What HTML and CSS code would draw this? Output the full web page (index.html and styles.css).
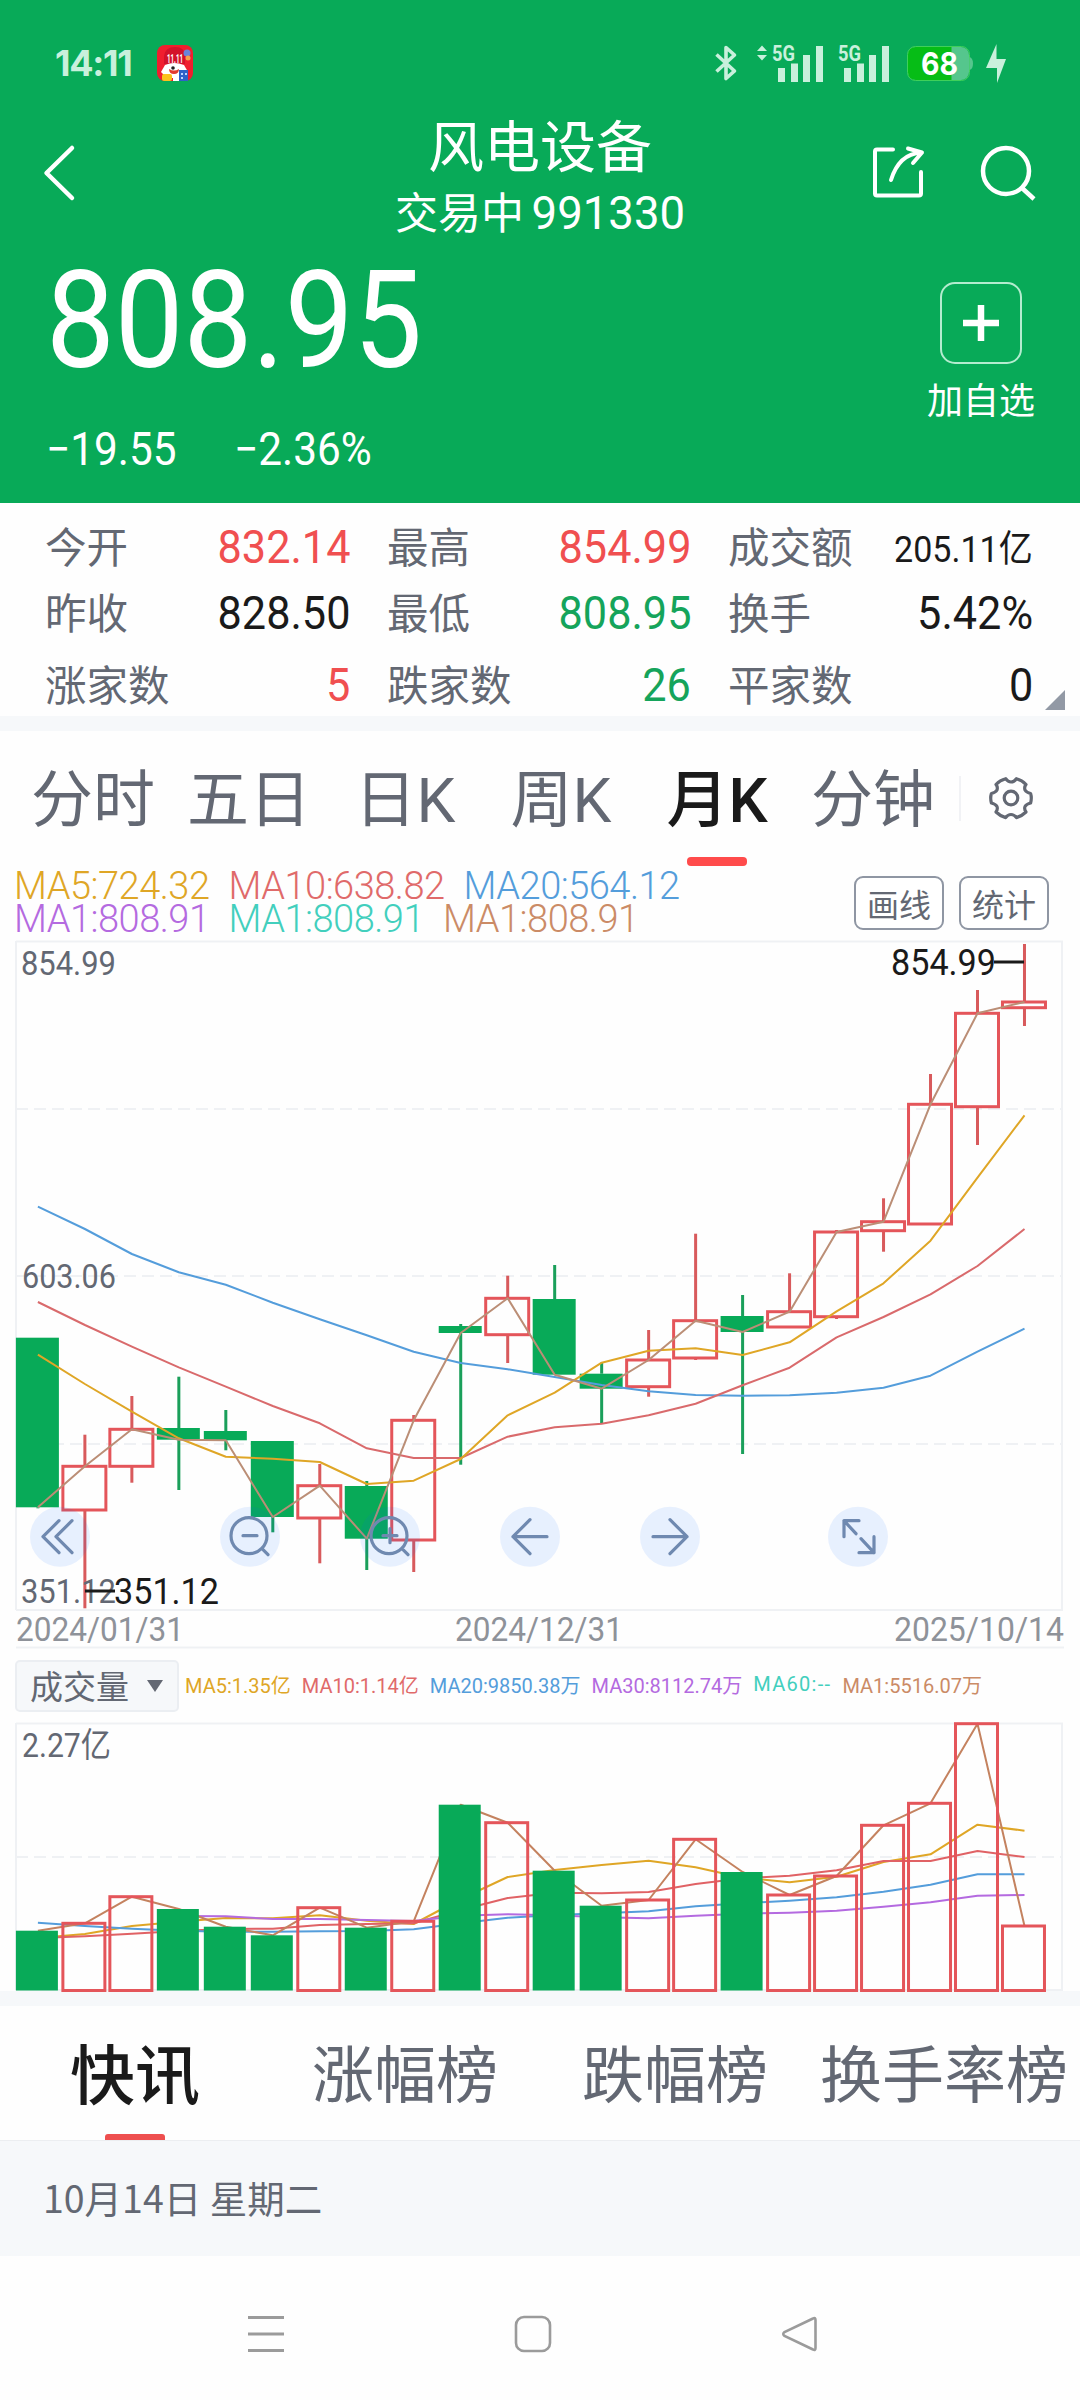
FILE: index.html
```html
<!DOCTYPE html>
<html lang="zh-CN">
<head>
    <meta charset="UTF-8">
    <meta name="viewport" content="width=device-width, initial-scale=1.0">
    <title>风电设备 991330</title>
    <link rel="stylesheet" href="styles.css">
</head>
<body>
    <header class="header">
        <div class="status-bar">
            <span class="clock">14:11</span>
            <svg class="app-icon" width="36" height="36" viewBox="0 0 36 36">
                <rect width="36" height="36" rx="8" fill="#f01e2e"/>
                <path d="M7 19V11Q8 2 18 2Q28 2 28 11V19Z" fill="#d3122a"/>
                <circle cx="30" cy="8" r="3.5" fill="#6a83d8"/>
                <circle cx="31" cy="13" r="2.5" fill="#f3a04c"/>
                <path d="M4 27L8 20Q17 16 27 20L31 27L25 33H10Z" fill="#fff"/>
                <path d="M12 24Q17 27 22 24Q22 29 17 29Q12 29 12 24Z" fill="#e23a2e"/>
                <circle cx="16" cy="23" r="1.8" fill="#222"/>
                <rect x="5" y="29" width="10" height="7" rx="2" fill="#fbc21c"/>
                <rect x="16" y="31" width="6" height="5" fill="#fff"/>
                <rect x="22" y="25" width="9" height="11" fill="#2f62c8"/>
                <path d="M24 28h2v2h-2zM28 28h2v2h-2zM24 32h2v2h-2z" fill="#bcd4ff"/>
                <text x="10" y="18" class="app-text" textLength="16" lengthAdjust="spacingAndGlyphs">11.11</text>
            </svg>
            <div class="status-icons">
                <svg width="24" height="40" viewBox="0 0 24 40">
                    <path d="M2.5 11.5L20.5 28L12 35.500V4.500L20.500 12L2.500 28.500" fill="none" stroke="#c9f0dc" stroke-width="3.6" stroke-linejoin="round"/>
                </svg>
                <svg width="68" height="40" viewBox="0 0 68 40" class="signal-dual">
                    <path d="M5 2.500L10 8H0ZM0 12H10L5 17.500Z" fill="#c9f0dc"/>
                    <text x="15" y="18" class="net" textLength="23" lengthAdjust="spacingAndGlyphs">5G</text>
                    <path d="M21 25h7v14h-7zM34 20.500h7v18.500h-7zM46 12h7v27h-7zM59 3h7v36h-7z" fill="#c9f0dc"/>
                </svg>
                <svg width="53" height="40" viewBox="0 0 53 40" class="signal">
                    <text x="0" y="18" class="net" textLength="23" lengthAdjust="spacingAndGlyphs">5G</text>
                    <path d="M6 25h7v14h-7zM19 20.500h7v18.500h-7zM31 12h7v27h-7zM44 3h7v36h-7z" fill="#c9f0dc"/>
                </svg>
                <svg width="66" height="36" viewBox="0 0 66 36" class="battery">
                    <rect x="1" y="1" width="61" height="33" rx="8" fill="#55c68d"/>
                    <path d="M9 1H44.500V34H9Q1 34 1 26V9Q1 1 9 1Z" fill="#06bd16"/>
                    <rect x=".5" y=".5" width="62" height="34" rx="8" fill="none" stroke="#3fd05a"/>
                    <path d="M62.500 11Q66 12 66 17.500Q66 23 62.500 24Z" fill="#55c68d"/>
                    <text x="14" y="28.500" class="battery-text" textLength="37" lengthAdjust="spacingAndGlyphs">68</text>
                </svg>
                <svg width="22" height="40" viewBox="0 0 22 40">
                    <path d="M11.500 1V16H21L12 40V25H1Z" fill="#c9f0dc"/>
                </svg>
            </div>
        </div>
        <div class="title-bar">
            <svg class="back" width="34" height="58" viewBox="0 0 34 58">
                <path d="M31 4L5.500 29L31 54" fill="none" stroke="#fff" stroke-width="4.500" stroke-linecap="round" stroke-linejoin="round"/>
            </svg>
            <div class="titles">
                <h1>风电设备</h1>
                <p>交易中 <span class="num">991330</span></p>
            </div>
            <div class="actions">
                <svg width="54" height="54" viewBox="0 0 54 54" fill="none" stroke="#fff" stroke-width="4" stroke-linecap="round" stroke-linejoin="round">
                    <path d="M21 4.500H5Q3 4.500 3 6.500V48.500Q3 50.500 5 50.500H47Q49 50.500 49 48.500V27"/>
                    <path d="M19 35Q27 9 49 7.500M36 3.500L50 7.500L41 18"/>
                </svg>
                <svg width="56" height="56" viewBox="0 0 56 56" fill="none" stroke="#fff" stroke-width="4.500">
                    <circle cx="26" cy="26" r="23"/>
                    <path d="M42 43L54 54"/>
                </svg>
            </div>
        </div>
        <div class="quote">
            <div>
                <div class="price">808.95</div>
                <div class="change"><span>−19.55</span><span>−2.36%</span></div>
            </div>
            <div class="add">
                <div class="add-box">
                    <svg width="36" height="36" viewBox="0 0 36 36"><path d="M18 0V36M0 18H36" stroke="#fff" stroke-width="6.500"/></svg>
                </div>
                <span>加自选</span>
            </div>
        </div>
    </header>

    <section class="stats">
        <div class="stat"><span>今开</span><b class="up">832.14</b></div>
        <div class="stat"><span>最高</span><b class="up">854.99</b></div>
        <div class="stat"><span>成交额</span><b class="small">205.11亿</b></div>
        <div class="stat"><span>昨收</span><b>828.50</b></div>
        <div class="stat"><span>最低</span><b class="down">808.95</b></div>
        <div class="stat"><span>换手</span><b>5.42%</b></div>
        <div class="stat"><span>涨家数</span><b class="up">5</b></div>
        <div class="stat"><span>跌家数</span><b class="down">26</b></div>
        <div class="stat"><span>平家数</span><b>0</b></div>
        <i class="corner"></i>
    </section>

    <nav class="periods">
        <a>分时</a>
        <a>五日</a>
        <a>日K</a>
        <a>周K</a>
        <a class="active">月K</a>
        <a>分钟</a>
        <span class="divider"></span>
        <svg class="gear" width="46" height="46" viewBox="0 0 46 46" fill="none" stroke="#636873" stroke-width="3.200" stroke-linejoin="round">
            <path d="M17.700 3.700Q20 7 23 7Q26 7 28.400 3.700Q34 5 38 9.500Q36 12 37 15Q38.500 17.500 42.600 18.500Q44 23 42.600 28Q38.500 29 37 31.500Q36 34 38 37Q34 41 28.400 42.600Q26 39.500 23 39.500Q20 39.500 17.700 42.600Q12 41 8 37Q10 34 9 31.500Q7.500 29 3.400 28Q2 23 3.400 18.500Q7.500 17.500 9 15Q10 12 8 9.500Q12 5 17.700 3.700Z"/>
            <circle cx="23" cy="23" r="6.800"/>
        </svg>
    </nav>

    <section class="ma-bar">
        <div class="ma-legend">
            <div class="ma-row"><span class="c-gold">MA5:724.32</span><span class="c-red">MA10:638.82</span><span class="c-blue">MA20:564.12</span></div>
            <div class="ma-row"><span class="c-purple">MA1:808.91</span><span class="c-teal">MA1:808.91</span><span class="c-brown">MA1:808.91</span></div>
        </div>
        <button>画线</button>
        <button>统计</button>
    </section>

    <svg id="kline" class="kline" width="1080" height="713" viewBox="0 940 1080 713"></svg>

    <section class="volume-bar">
        <div class="select">成交量<i></i></div>
        <span class="c-gold">MA5:1.35亿</span>
        <span class="c-red">MA10:1.14亿</span>
        <span class="c-blue">MA20:9850.38万</span>
        <span class="c-purple">MA30:8112.74万</span>
        <span class="c-teal wide">MA60:--</span>
        <span class="c-brown">MA1:5516.07万</span>
    </section>

    <svg id="volume" class="volume" width="1080" height="271" viewBox="0 1720 1080 271"></svg>

    <nav class="lists">
        <a class="active">快讯</a>
        <a>涨幅榜</a>
        <a>跌幅榜</a>
        <a>换手率榜</a>
    </nav>
    <div class="date">10月14日 星期二</div>

    <footer class="sys-nav">
        <svg width="36" height="38" viewBox="0 0 36 38"><path d="M0 2.500H36M0 19H36M0 35.500H36" stroke="#9b9b9b" stroke-width="3"/></svg>
        <svg width="38" height="38" viewBox="0 0 38 38"><rect x="2" y="2" width="34" height="34" rx="8" fill="none" stroke="#9b9b9b" stroke-width="2.600"/></svg>
        <svg width="38" height="38" viewBox="0 0 38 38"><path d="M31 3.500Q33.500 2 33.500 5V33Q33.500 36 31 34.500L2.500 21Q0 19 2.500 17Z" fill="none" stroke="#9b9b9b" stroke-width="2.600"/></svg>
    </footer>
    <script src="chart.js"></script>
</body>
</html>
```

FILE: styles.css
```css
body {
    margin: 0;
    width: 1080px;
    background: #fefefe;
    color: #1a1a1a;
    font-family: Roboto, "Noto Sans CJK SC", sans-serif;
}
h1, p {
    margin: 0;
    font-weight: 400;
}
svg {
    display: block;
    flex: none;
    overflow: visible;
}

/* header */
.header {
    height: 503px;
    background: #08aa58;
    color: #fff;
}
.status-bar {
    display: flex;
    align-items: center;
    height: 126px;
    margin-bottom: -14px;
    padding: 0 73px 0 55px;
}
.clock {
    width: 102px;
    color: #c9f0dc;
    font: 700 36px/44px Inter, sans-serif;
    letter-spacing: -1.3px;
}
.app-text {
    fill: #fff;
    font: 700 12px Roboto, sans-serif;
}
.status-icons {
    display: flex;
    align-items: center;
    margin-left: auto;
}
.signal-dual {
    margin-left: 19px;
}
.signal {
    margin-left: 13px;
}
.battery {
    margin: 1px 12px 0 16px;
}
.net {
    fill: #c9f0dc;
    font: 700 22px Roboto, sans-serif;
}
.battery-text {
    fill: #fff;
    font: 700 31px Inter, sans-serif;
}
.title-bar {
    display: flex;
    align-items: center;
    justify-content: space-between;
    height: 122px;
    padding: 0 44px 0 41px;
}
.back {
    margin-right: 133px;
}
.titles {
    margin-top: 13px;
    text-align: center;
}
.titles h1 {
    font-size: 56px;
    line-height: 68px;
}
.titles p {
    font-size: 43px;
    line-height: 64px;
}
.titles .num {
    margin-left: -3px;
    font-size: 45.5px;
}
.actions {
    display: flex;
    gap: 54px;
}
.quote {
    display: flex;
    justify-content: space-between;
    padding: 21px 45px 0 46px;
}
/* digits are set slightly condensed */
.price {
    width: 380px;
    font-size: 136px;
    line-height: 132px;
    transform: scaleX(0.9);
    transform-origin: left;
}
.change {
    display: flex;
    gap: 46px;
    margin-top: 36px;
    font-size: 46px;
    line-height: 52px;
}
.change span {
    transform: scaleX(0.92);
    transform-origin: left;
}
.add {
    display: flex;
    flex-direction: column;
    align-items: center;
    margin-top: 27px;
    font-size: 36px;
    line-height: 46px;
}
.add-box {
    display: flex;
    align-items: center;
    justify-content: center;
    box-sizing: border-box;
    width: 82px;
    height: 82px;
    margin: 0 0 15px 1px;
    border: 2px solid #b4eccf;
    border-radius: 15px;
}

/* quote details */
.stats {
    position: relative;
    display: grid;
    grid-template-columns: 305px 304px 305px;
    grid-template-rows: 66px 66px 78px;
    column-gap: 37px;
    height: 203px;
    padding: 10px 0 0 45px;
    border-bottom: 15px solid #f6f8fa;
}
.stat {
    display: flex;
    align-items: center;
    justify-content: space-between;
    color: #636873;
    font-size: 41.500px;
}
.stat span {
    margin-top: -3px;
}
.stat b {
    color: #1a1a1a;
    font-size: 47px;
    font-weight: 400;
    transform: scaleX(0.92);
    transform-origin: right;
}
.stat .small {
    font-size: 37px;
}
.stat .up {
    color: #f04f50;
}
.stat .down {
    color: #15a45b;
}
.corner {
    position: absolute;
    right: 15px;
    bottom: 6px;
    border-left: 20px solid transparent;
    border-bottom: 20px solid #9299a5;
}

/* period tabs */
.periods {
    display: flex;
    align-items: center;
    height: 137px;
    color: #636873;
    font-size: 62px;
}
.periods a {
    position: relative;
    width: 156px;
    margin-top: -10px;
    text-align: center;
}
.periods a:first-child {
    margin-left: 15px;
}
.periods .active,
.lists .active {
    color: #1a1a1a;
    font-weight: 500;
}
.periods .active::after {
    content: "";
    position: absolute;
    left: 50%;
    bottom: -26px;
    width: 60px;
    height: 9px;
    margin-left: -30px;
    border-radius: 4px;
    background: #ff4b4b;
}
.divider {
    width: 2px;
    height: 45px;
    margin: -3px 27px 0 8px;
    background: #f1f2f5;
}
.gear {
    margin-top: -3px;
}

/* moving averages */
.ma-bar {
    display: flex;
    align-items: center;
    height: 72px;
    padding: 0 31px 0 14px;
}
.ma-legend {
    margin: -2px auto 0 0;
    font-size: 38px;
    font-weight: 300;
    line-height: 33px;
    letter-spacing: -0.5px;
}
.ma-row {
    display: flex;
    gap: 19px;
}
.c-gold { color: #dfa626; }
.c-red { color: #e06a6a; }
.c-blue { color: #549ddb; }
.c-purple { color: #b46ae0; }
.c-teal { color: #42cfbd; }
.c-brown { color: #cb8b66; }
.ma-bar button {
    box-sizing: border-box;
    width: 90px;
    height: 54px;
    margin: 0 0 3px 15px;
    padding: 0;
    border: 2px solid #8f96a3;
    border-radius: 9px;
    background: #fff;
    color: #636873;
    font: 32px/46px "Noto Sans CJK SC", sans-serif;
}

/* charts */
.grid {
    fill: none;
    stroke: #eff1f4;
    stroke-width: 2;
}
.dash {
    stroke-dasharray: 12 6;
}
.ma {
    fill: none;
    stroke-width: 2;
    stroke-linejoin: round;
}
.bar-up {
    fill: none;
    stroke: #e4555a;
    stroke-width: 3;
}
.bar-down {
    fill: #08aa58;
}
.wick-up {
    fill: #d85a5c;
}
.wick-down {
    fill: #1a9f5a;
}
.axis {
    fill: #636873;
    font-size: 34px;
}
.axis-date {
    fill: #8e9299;
    font-size: 34px;
}
.mark {
    fill: #1a1a1a;
    font-size: 37px;
}
.mark-line {
    stroke: #1a1a1a;
    stroke-width: 3;
}
.tool circle {
    fill: rgba(0, 102, 255, 0.09);
}
.tool path {
    fill: none;
    stroke: #6f89b0;
    stroke-width: 3.200;
    stroke-linecap: round;
    stroke-linejoin: round;
}

/* volume header */
.volume-bar {
    display: flex;
    align-items: center;
    gap: 11px;
    height: 67px;
    padding-left: 15px;
    font-size: 20px;
    white-space: nowrap;
}
.volume-bar > span {
    margin-top: -5px;
}
.volume-bar .wide {
    letter-spacing: 1.3px;
}
.volume-bar .select {
    display: flex;
    align-items: center;
    box-sizing: border-box;
    width: 164px;
    height: 52px;
    margin: -1px -5px 0 0;
    padding: 0 0 3px 13px;
    border: 2px solid #ebeef2;
    border-radius: 5px;
    background: #f6f8fa;
    color: #636873;
    font-size: 33px;
}
.select i {
    margin: 2px 0 0 18px;
    border: 8px solid transparent;
    border-top: 12px solid #636873;
    border-bottom: 0;
}

/* bottom lists */
.lists {
    display: flex;
    align-items: center;
    height: 134px;
    border-top: 15px solid #f6f8fa;
    color: #636873;
    font-size: 62px;
    white-space: nowrap;
}
.lists a {
    position: relative;
    width: 270px;
    margin-top: -4px;
    text-align: center;
}
.lists a:last-child {
    width: 268px;
}
.lists .active {
    font-size: 65px;
}
.lists .active::after {
    content: "";
    position: absolute;
    left: 105px;
    bottom: -22px;
    width: 60px;
    height: 6px;
    border-radius: 3px 3px 0 0;
    background: #ee4f4f;
}
.date {
    height: 115px;
    padding-left: 43px;
    border-top: 1px solid #eceef1;
    background: #f6f8fa;
    color: #636873;
    font: 37.500px/112px "Noto Sans CJK SC", sans-serif;
}
.sys-nav {
    display: flex;
    align-items: center;
    gap: 230px;
    height: 144px;
    padding: 12px 0 0 248px;
    box-sizing: border-box;
}
```

FILE: chart.js
```js
// x centre of candle i
const STEP = 46.98;
const cx = i => 37.9 + i * STEP;

// [up, body top, body bottom, high, low]
const candles = [
    [0, 1337.7, 1507.3, 1337.7, 1508.3],
    [1, 1466.3, 1510, 1434.7, 1608.3],
    [1, 1429.3, 1466.3, 1396, 1482.7],
    [0, 1428, 1439.7, 1376.7, 1490],
    [0, 1431, 1440.3, 1410, 1450.3],
    [0, 1441, 1517, 1441, 1532.3],
    [1, 1485.7, 1518, 1464, 1563.3],
    [0, 1486, 1538.7, 1481, 1570],
    [1, 1420.3, 1540, 1415, 1572],
    [0, 1326, 1333, 1324, 1464.7],
    [1, 1298.3, 1334.7, 1275.7, 1363],
    [0, 1299, 1374.7, 1265, 1374.7],
    [0, 1373.7, 1388.7, 1362.7, 1423.3],
    [1, 1360, 1386.7, 1330, 1396.7],
    [1, 1320.7, 1358, 1233.7, 1360],
    [0, 1316, 1332, 1295, 1454],
    [1, 1311.7, 1327, 1273.3, 1327],
    [1, 1232, 1316.7, 1230, 1319],
    [1, 1221.7, 1230.7, 1198.3, 1251.7],
    [1, 1104.3, 1224, 1074, 1225],
    [1, 1013.3, 1106.7, 990, 1145],
    [1, 1002, 1007.7, 944, 1026]
];
const priceMa = {
    '#549ddb': [1206.7, 1229, 1254, 1272.3, 1284.7, 1302.7, 1319.3, 1335.3, 1351.7, 1363, 1369.3, 1377, 1385, 1391.3, 1395, 1395.7, 1395.3, 1392.7, 1387.7, 1375.7, 1351.7, 1328.7],
    '#d96a6c': [1302, 1325, 1346.7, 1367.3, 1386.7, 1406, 1423.3, 1448.3, 1458, 1458, 1436.7, 1427.3, 1423.7, 1415.3, 1403.7, 1385.3, 1367.7, 1337.3, 1317, 1294.3, 1266, 1229],
    '#dfa626': [1354.7, 1384, 1411.7, 1438.3, 1456.7, 1458.7, 1462, 1484, 1480.7, 1459, 1415.3, 1392.7, 1362.7, 1350.7, 1348.3, 1355, 1342.3, 1311.3, 1283.3, 1240.7, 1177.7, 1115.3],
    '#bb8e76': candles.map(c => c[0] ? c[1] : c[2])
};
const volumes = [1930.7, 1923.3, 1896.7, 1909, 1926.7, 1935.3, 1907.7, 1927.7, 1921.3, 1804.7, 1822.7, 1870.7, 1905.7, 1900, 1839.3, 1872, 1895, 1876, 1825.3, 1803.3, 1723.7, 1926];
const volumeMa = {
    '#dfa626': [1938, 1934, 1926, 1921.7, 1918, 1918.3, 1915.3, 1920.7, 1924, 1899, 1877, 1870, 1865, 1860.7, 1867.3, 1877.7, 1882.3, 1876.7, 1862, 1854.3, 1824.7, 1830.7],
    '#e06265': [1938, 1936.3, 1933.7, 1931, 1929, 1928.7, 1925, 1924, 1923.3, 1910, 1898, 1892.7, 1893.3, 1892, 1884, 1878.3, 1875.7, 1870.3, 1861, 1861, 1851, 1857],
    '#549ddb': [1922.7, 1926, 1928.7, 1930.7, 1931.7, 1931.7, 1931.3, 1931, 1929.3, 1923.3, 1917.7, 1915, 1913.3, 1911.3, 1906.3, 1903.3, 1900.7, 1897.3, 1891.7, 1884.7, 1874.3, 1874.3],
    '#b46ae0': [null, null, null, 1916, 1916.3, 1919, 1919, 1920, 1921, 1915.7, 1914.3, 1915.3, 1917.3, 1918.3, 1915.7, 1913.7, 1912.7, 1910.7, 1906.7, 1902.3, 1895.7, 1895],
    '#c4825f': volumes
};

function lines(series) {
    return Object.entries(series).map(([color, ys]) => {
        const pts = ys.map((y, i) => y === null ? '' : `${cx(i).toFixed(1)},${y}`).join(' ').trim();
        return `<polyline class="ma" stroke="${color}" points="${pts}"/>`;
    }).join('');
}
function bar(i, up, top, bottom, w) {
    return `<rect class="${up ? 'bar-up' : 'bar-down'}" x="${cx(i) - 22}" y="${top}" width="${w}" height="${bottom - top}"/>`;
}
function wick(i, up, y1, y2) {
    return y2 > y1 ? `<rect class="${up ? 'wick-up' : 'wick-down'}" x="${cx(i) - 1.5}" y="${y1}" width="3" height="${y2 - y1}"/>` : '';
}
function label(cls, x, y, width, text) {
    return `<text class="${cls}" x="${x}" y="${y}" textLength="${width}" lengthAdjust="spacingAndGlyphs">${text}</text>`;
}
function tool(x, d) {
    return `<g class="tool" transform="translate(${x} 1536.7)"><circle r="30"/><path d="${d}"/></g>`;
}

document.getElementById('kline').innerHTML =
    '<path class="grid" d="M16 941.500H1063M16 941V1610M1062 941V1610M16 1610H1063M16 1647.500H1064"/>' +
    '<path class="grid dash" d="M16 1109H1063M16 1276H1063M16 1444H1063"/>' +
    candles.map(([up, top, bottom, high, low], i) =>
        wick(i, up, high, top) + wick(i, up, bottom, low) + bar(i, up, top, bottom, 43)).join('') +
    lines(priceMa) +
    label('axis', 21, 975, 95, '854.99') +
    label('axis', 22, 1288, 94, '603.06') +
    label('axis', 21, 1603, 95, '351.12') +
    '<path class="mark-line" d="M994 962H1024M85 1591H115"/>' +
    label('mark', 891, 975, 105, '854.99') +
    label('mark', 114, 1604, 105, '351.12') +
    label('axis-date', 16, 1641, 168, '2024/01/31') +
    label('axis-date', 455, 1641, 168, '2024/12/31') +
    label('axis-date', 894, 1641, 170, '2025/10/14') +
    tool(60, 'M-1 -16L-17 0L-1 16M12 -16L-4 0L12 16') +
    tool(250, 'M17 -1A18 18 0 1 1 -19 -1A18 18 0 1 1 17 -1M12 12L18 18M-7 -1H7') +
    tool(390, 'M17 -1A18 18 0 1 1 -19 -1A18 18 0 1 1 17 -1M12 12L18 18M-7 -1H7M0 -8V6') +
    tool(530, 'M17 0H-17M0 -17L-17 0L0 17') +
    tool(670, 'M-17 0H17M0 -17L17 0L0 17') +
    tool(858, 'M-14 0V-16H1M-14 -16L-2 -3M16 0V16H1M16 16L3 2');

document.getElementById('volume').innerHTML =
    '<path class="grid" d="M16 1723.500H1063M16 1723V1990M1062 1723V1990M16 1990H1063"/>' +
    '<path class="grid dash" d="M16 1857H1063"/>' +
    lines(volumeMa) +
    volumes.map((y, i) => bar(i, candles[i][0], y, 1990.5, 42)).join('') +
    label('axis', 22, 1757, 89, '2.27亿');
```
